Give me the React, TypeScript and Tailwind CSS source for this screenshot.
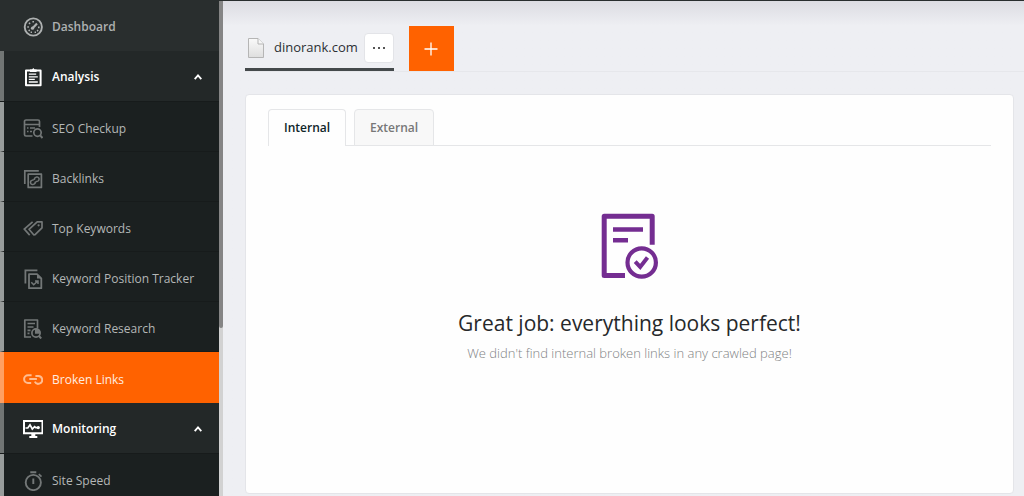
import type { ReactNode } from "react";
import clsx from "clsx";

type IconProps = {
  children: ReactNode;
};

function Icon({ children }: IconProps) {
  return (
    <svg
      viewBox="0 0 20 20"
      className="w-5 h-5 shrink-0"
      fill="none"
      stroke="currentColor"
      strokeWidth="1.7"
      aria-hidden="true"
    >
      {children}
    </svg>
  );
}

const icons = {
  dashboard: (
    <Icon>
      <circle cx="10.3" cy="10" r="8.6" strokeWidth="1.9" />
      <path d="M9.6 11.2L14 6.6" strokeWidth="2.2" />
      <circle cx="9.5" cy="11.2" r="1.6" fill="currentColor" stroke="none" />
      <path
        d="M4.3 10h1.6M15 10.4h1.6M6 5.8l1.1 1.1M10.2 4v1.6M5.6 13.8l1.2-.8M14 13.2l1.2.8M7.6 15.2h1.4M11.6 15.2h1.4"
        strokeWidth="1.6"
      />
    </Icon>
  ),
  analysis: (
    <Icon>
      <path d="M3 3.600h14.600v14.600H3z" strokeWidth="2" strokeLinejoin="round" />
      <path d="M7 5V2.600h2L10.300 1l1.300 1.600h2V5z" fill="currentColor" stroke="none" />
      <path d="M5.800 7.200h7.400M5.800 9.800h9M5.800 12.400h6M5.800 15h9" strokeWidth="1.300" />
    </Icon>
  ),
  checkup: (
    <Icon>
      <path d="M9.500 17H3c-.8 0-1.500-.7-1.500-1.500V2.500C1.500 1.600 2.200 1 3 1h12c.9 0 1.500.6 1.500 1.500V8M1.500 5.500h15" />
      <path d="M4 9h1.500M4 12.500h1.500M7 9h5M7 12.500h2" />
      <circle cx="14.500" cy="13.600" r="3.700" />
      <path d="M17.200 16.300l2.300 2.700" strokeWidth="2" />
    </Icon>
  ),
  backlinks: (
    <Icon>
      <path d="M1.800 15V1.800h14" />
      <path d="M5.200 5.200h13.200v13.200H5.200z" strokeLinejoin="round" />
      <path
        d="M10.600 10.800l-1.700.6a2.100 2.100 0 0 0 1.500 4c1.600-.5 2.200-1.300 1.800-2.900M12.900 12.700l1.800-.6a2.100 2.100 0 0 0-1.500-4c-1.600.6-2.200 1.500-1.700 3"
        strokeWidth="1.500"
      />
    </Icon>
  ),
  keywords: (
    <Icon>
      <path d="M19 2.900h-4.800L6 10.300l4.700 5.500 1.400-.1L19 8.800z" strokeLinejoin="round" />
      <path d="M9.600 2.900L1.300 10.100l5.400 6" />
      <circle cx="15.600" cy="6.300" r="1.100" fill="currentColor" stroke="none" />
    </Icon>
  ),
  position: (
    <Icon>
      <path d="M2.400 14.500V1.300h12" strokeWidth="1.800" />
      <path d="M6 5.200h8l4.300 4.300v9.700H6z" strokeWidth="1.800" strokeLinejoin="round" />
      <path d="M14 5.200v4.300h4.300z" fill="currentColor" stroke="none" />
      <path d="M8.300 13.300l2.400 2.500 4-3.800M12 11.900h3v3" strokeWidth="1.500" />
    </Icon>
  ),
  research: (
    <Icon>
      <path d="M8 18H1.800V1h12.700v8" strokeLinejoin="round" />
      <path d="M4.500 4.500h7.500M4.500 8h6M4.500 11.300h3M4.500 14.300h2" />
      <circle cx="13" cy="14" r="4.100" />
      <path d="M12.800 13.800V10a4 4 0 0 1 3.900 3.800z" fill="currentColor" />
      <path d="M16 17l2.200 2.500" strokeWidth="2" />
    </Icon>
  ),
  broken: (
    <Icon>
      <path
        d="M8.600 5.200H5a3.900 3.900 0 0 0 0 7.800h3.200M6.300 9.100h7.600M12.400 6h3a3.900 3.900 0 1 1-3.600 5.600"
        strokeWidth="2"
      />
    </Icon>
  ),
  monitoring: (
    <Icon>
      <path d="M1 2h18.500v12.200H1z" strokeWidth="2" />
      <path d="M8.300 14.500h4V17h2v2h-8v-2h2z" fill="currentColor" stroke="none" />
      <path d="M2.500 9h2.300L7 5.800l2.300 4.200 2.300-2.300 1.200 1h3" strokeWidth="1.700" />
      <circle cx="15.300" cy="8.600" r="1.600" fill="currentColor" stroke="none" />
    </Icon>
  ),
  speed: (
    <Icon>
      <circle cx="10.300" cy="11.500" r="7.600" strokeWidth="1.900" />
      <path d="M7.300 1.200h6M10.300 7.500v5.400" strokeWidth="1.900" />
      <path d="M15.800 3.200l2.700 2.500" strokeWidth="1.800" />
    </Icon>
  ),
};

function Chevron() {
  return (
    <svg viewBox="0 0 8 6" className="w-2 h-1.5 ml-auto" fill="none" stroke="currentColor" strokeWidth="1.8" aria-hidden="true">
      <path d="M.7 5.200L4 1.400l3.300 3.800" />
    </svg>
  );
}

type GroupProps = {
  label: string;
  icon: ReactNode;
  children: ReactNode;
};

function Group({ label, icon, children }: GroupProps) {
  return (
    <li>
      <button
        type="button"
        aria-expanded="true"
        className="flex items-center gap-[9px] w-full h-[50px] pt-[2px] pl-[19px] pr-[17px] border-l-4 border-[#717574] bg-[#232828] text-white font-semibold"
      >
        {icon}
        {label}
        <Chevron />
      </button>
      <ul className="border-t border-[#171b1b]">{children}</ul>
    </li>
  );
}

type SubItemProps = {
  label: string;
  icon: ReactNode;
  active?: boolean;
};

function SubItem({ label, icon, active = false }: SubItemProps) {
  return (
    <li>
      <a
        href="#"
        aria-current={active ? "page" : undefined}
        className={clsx(
          "flex items-center gap-[9px] pt-1 pl-[19px] border-l-4",
          active
            ? "h-[51px] border-l-[#ff9f62] bg-[#ff6200] text-[#ffede1]"
            : "h-[50px] border-l-[#989c9b] border-b border-b-[#171b1b] bg-[#1b2020] text-[#b4b7b7]",
        )}
      >
        <span className={active ? "text-[#ffbd91]" : "text-[#737777]"}>{icon}</span>
        {label}
      </a>
    </li>
  );
}

function Sidebar() {
  return (
    <aside className="flex shrink-0 overflow-hidden">
      <nav className="w-[219px] text-xs font-medium whitespace-nowrap">
        <ul>
          <li>
            <a href="#" className="flex items-center gap-[9px] h-[50px] pt-[2px] pl-[23px] bg-[#292e2e] text-[#aeb1b1] font-semibold">
              {icons.dashboard}
              Dashboard
            </a>
          </li>
          <Group label="Analysis" icon={icons.analysis}>
            <SubItem label="SEO Checkup" icon={icons.checkup} />
            <SubItem label="Backlinks" icon={icons.backlinks} />
            <SubItem label="Top Keywords" icon={icons.keywords} />
            <SubItem label="Keyword Position Tracker" icon={icons.position} />
            <SubItem label="Keyword Research" icon={icons.research} />
            <SubItem label="Broken Links" icon={icons.broken} active />
          </Group>
          <Group label="Monitoring" icon={icons.monitoring}>
            <SubItem label="Site Speed" icon={icons.speed} />
          </Group>
        </ul>
      </nav>
      <div className="w-1 bg-[#d2d2d2]">
        <div className="h-[66%] rounded-b bg-[#858585]" />
      </div>
    </aside>
  );
}

function SiteTabs() {
  return (
    <div className="flex items-end border-b border-[#e6e7eb]">
      <div className="flex items-center h-[45px] pt-0.5 pl-[3px] border-b-3 border-[#44494b]">
        <svg viewBox="0 0 16 20" className="w-4 h-5 mr-2.5" aria-hidden="true">
          <defs>
            <linearGradient id="sheet" x1="0" y1="0" x2="0" y2="1">
              <stop offset="0" stopColor="#fafafa" />
              <stop offset="1" stopColor="#dedede" />
            </linearGradient>
          </defs>
          <path d="M.5.5h9.500l5.500 5.500v13.500H.5z" fill="url(#sheet)" stroke="#b5b5b5" />
          <path d="M10 .5V6h5.500" fill="#f7f7f7" stroke="#b5b5b5" />
        </svg>
        <span className="text-[13px] text-[#2c2f33] font-medium">dinorank.com</span>
        <button
          type="button"
          aria-label="Site options"
          className="flex items-center justify-center gap-[3px] w-[30px] h-[30px] ml-1.5 rounded-sm border border-[#e3e4e8] bg-white"
        >
          <span className="w-0.5 h-0.5 bg-[#555]" />
          <span className="w-0.5 h-0.5 bg-[#555]" />
          <span className="w-0.5 h-0.5 bg-[#555]" />
        </button>
      </div>
      <button
        type="button"
        aria-label="Add site"
        className="flex items-center justify-center w-[45px] h-[45px] ml-[15px] bg-[#ff6200] text-white"
      >
        <svg viewBox="0 0 14 14" className="w-3.5 h-3.5" stroke="currentColor" strokeWidth="1.3" aria-hidden="true">
          <path d="M7 .5v13M.5 7h13" />
        </svg>
      </button>
    </div>
  );
}

function EmptyState() {
  return (
    <div className="flex flex-col items-center pt-[67px] text-center">
      <svg viewBox="0 0 58 66" className="w-[58px] h-[66px]" fill="none" stroke="#742d91" aria-hidden="true">
        <path d="M24 62.500H3.200V3.200h48v28.500" strokeWidth="5" strokeLinejoin="round" />
        <path d="M12 16.500h30M12 27.200h15" strokeWidth="4.600" />
        <circle cx="40.700" cy="49.500" r="14.200" strokeWidth="4.200" />
        <path d="M34.200 48.700l5 5.200 7.300-9.300" strokeWidth="4" />
      </svg>
      <h1 className="mt-7 text-[21px] leading-8 text-[#26282a]">Great job: everything looks perfect!</h1>
      <p className="mt-1 text-[13px] leading-5 font-light text-[#808284]">
        We didn't find internal broken links in any crawled page!
      </p>
    </div>
  );
}

export default function App() {
  return (
    <div className="flex flex-col h-screen overflow-hidden bg-[#eeeff3] font-['Open_Sans','Noto_Sans',sans-serif]">
      <div className="h-px shrink-0 bg-[#292e2e]" />
      <div className="flex flex-1 min-h-0">
        <Sidebar />
        <main className="flex flex-col flex-1 min-w-0 bg-linear-to-b from-[#dcdce2] to-[#eeeff3] to-5%">
          <div className="pt-[25px] pl-[22px]">
            <SiteTabs />
          </div>
          <section className="flex-1 mt-[22px] mb-0.5 ml-[22px] mr-2.5 px-[22px] pt-[14px] rounded border border-[#e4e5e9] bg-[#fefefe]">
            <div role="tablist" className="flex gap-2 border-b border-[#e5e6e8] text-xs font-semibold">
              <button
                type="button"
                role="tab"
                aria-selected="true"
                className="h-[37px] px-[15px] -mb-px rounded-t border border-b-0 border-[#e5e6e8] bg-[#fefefe] text-[#0e2529]"
              >
                Internal
              </button>
              <button
                type="button"
                role="tab"
                aria-selected="false"
                className="h-[37px] px-[15px] -mb-px rounded-t border border-[#e5e6e8] bg-[#f8f8f8] text-[#777]"
              >
                External
              </button>
            </div>
            <EmptyState />
          </section>
        </main>
      </div>
    </div>
  );
}
